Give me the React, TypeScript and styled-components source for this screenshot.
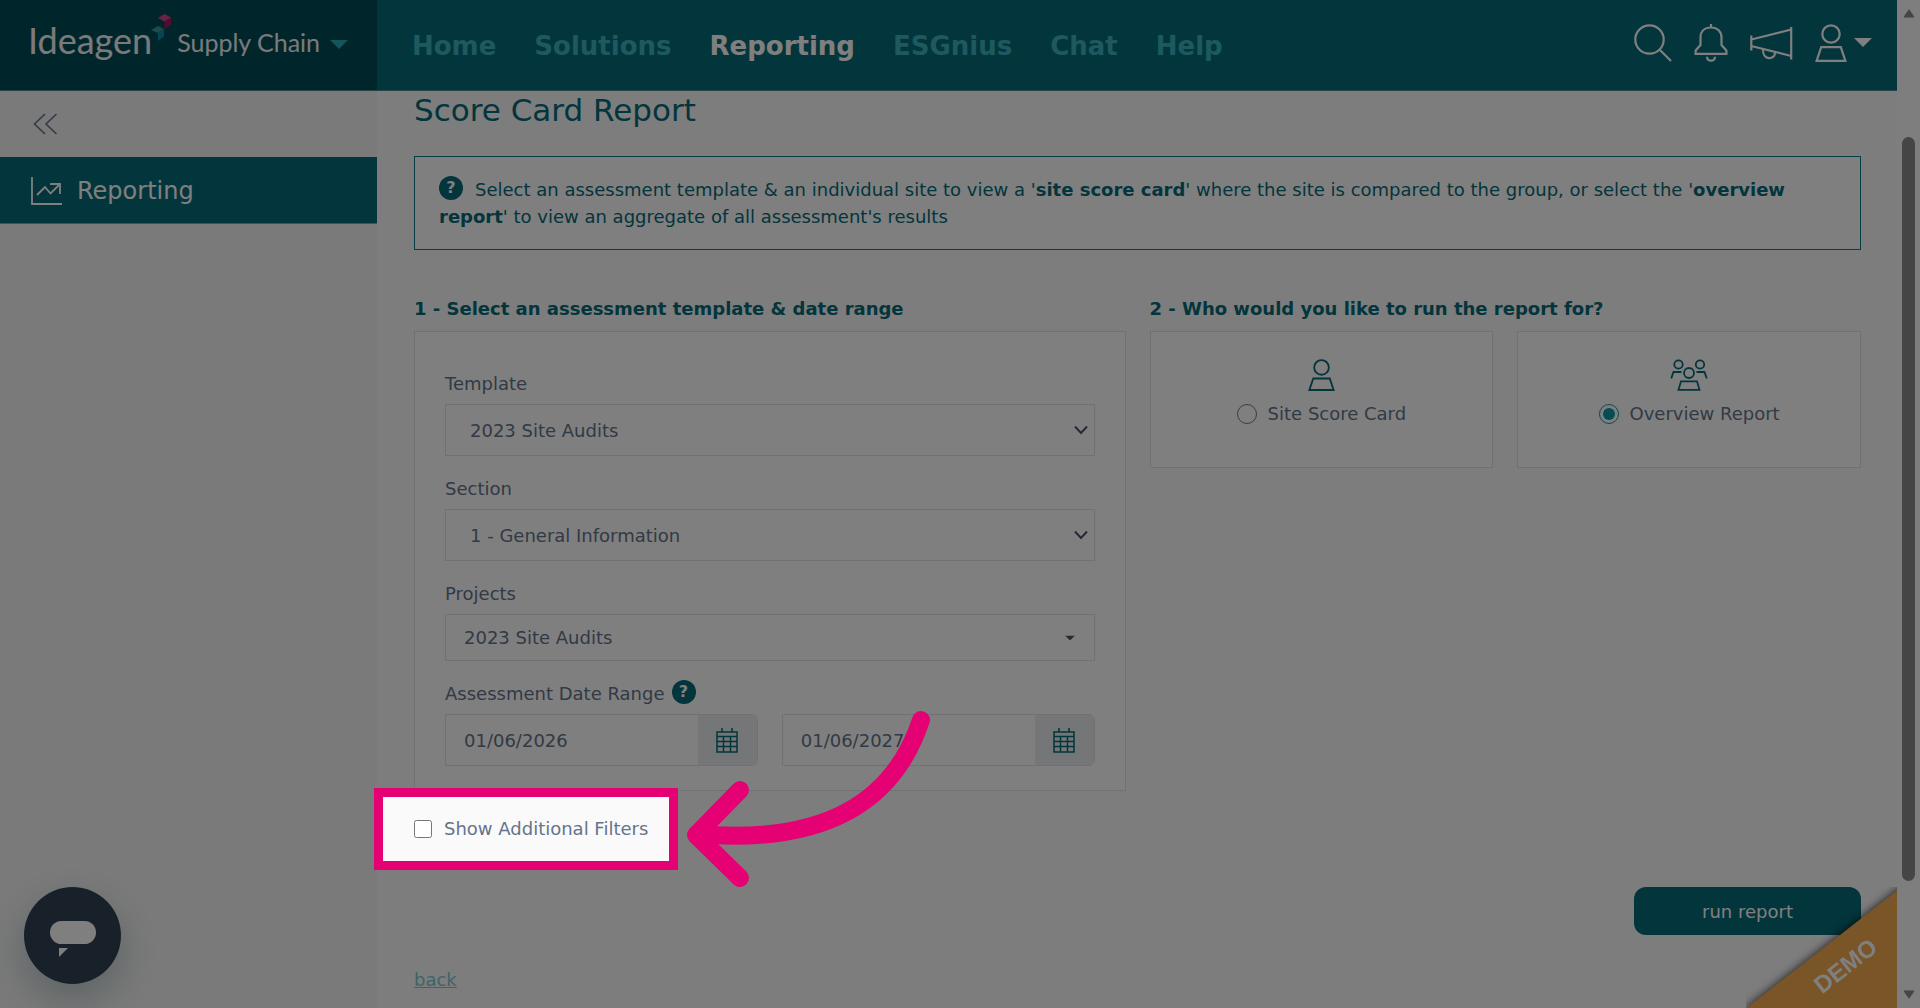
import React from "react";
import styled, { createGlobalStyle } from "styled-components";

const teal = "#066a78";
const slate = "#64748b";
const line = "#e2e2e4";
const pink = "#e50073";

const GlobalStyle = createGlobalStyle`
  *, *::before, *::after { box-sizing: border-box; }
  body {
    margin: 0;
    background: #fafafa;
    color: ${slate};
    font-family: Verdana, "DejaVu Sans", sans-serif;
    font-size: 16px;
    line-height: 27px;
  }
  button, input, select { font: inherit; color: inherit; }
`;

const Window = styled.div`
  display: flex;
  height: 100vh;
  overflow: hidden;
`;

const Page = styled.div`
  flex: 1;
  min-width: 0;
  display: flex;
  flex-direction: column;
`;

const TopBar = styled.header`
  display: flex;
  flex: none;
  height: 91px;
  background: ${teal};
  border-bottom: 1px solid #4e8a92;
`;

const Brand = styled.button`
  flex: none;
  display: flex;
  align-items: center;
  width: 377px;
  padding: 0 0 2px 28px;
  border: 0;
  background: #004d59;
  color: #f4f4f4;
  font-family: Lato, sans-serif;
  text-align: left;
`;

const BrandName = styled.span`
  padding-bottom: 8px;
  font-size: 36px;
  line-height: 44px;
`;

const BrandProduct = styled.span`
  padding: 0 10px 4px 0;
  font-size: 25px;
  line-height: 32px;
`;

const BrandMark = styled.svg`
  width: 21px;
  height: 28px;
  margin: 0 5px 32px -1px;
`;

const Nav = styled.nav`
  flex: 1;
  display: flex;
  align-items: center;
  gap: 38px;
  padding: 2px 0 0 35px;
`;

const NavLink = styled.a<{ $active?: boolean }>`
  color: ${(p) => (p.$active ? "#ffffff" : "#3cb3be")};
  font-size: 26px;
  font-weight: 700;
  line-height: 32px;
  text-decoration: none;
`;

const Tools = styled.div`
  display: flex;
  align-items: center;
  gap: 22px;
  padding: 0 25px 5px 0;
`;

const ToolButton = styled.button`
  display: flex;
  align-items: center;
  gap: 7px;
  padding: 0;
  border: 0;
  background: none;
  color: #ffffff;
`;

const Body = styled.div`
  flex: 1;
  min-height: 0;
  display: flex;
`;

const Sidebar = styled.aside`
  flex: none;
  width: 377px;
  background: #f5f5f5;
`;

const Collapse = styled.button`
  display: flex;
  align-items: center;
  height: 66px;
  padding: 0 32px;
  border: 0;
  background: none;
`;

const SideLink = styled.a`
  display: flex;
  align-items: center;
  gap: 14px;
  height: 67px;
  padding: 2px 0 0 31px;
  background: ${teal};
  border-bottom: 1px solid #7fa9af;
  color: #ffffff;
  font-size: 24px;
  text-decoration: none;
`;

const Main = styled.main`
  flex: 1;
  min-width: 0;
  display: flex;
  flex-direction: column;
  padding: 0 36px 0 37px;
`;

const Title = styled.h1`
  margin: 0 0 27px;
  color: ${teal};
  font-size: 31px;
  font-weight: 400;
  line-height: 38px;
`;

const Notice = styled.p`
  margin: 0 0 45px;
  padding: 19px 24px;
  background: #ffffff;
  border: 1px solid #0f7f8c;
  color: ${teal};
  font-size: 18px;
`;

const HelpDot = styled.span<{ $gap?: boolean }>`
  display: inline-block;
  align-self: flex-start;
  vertical-align: top;
  width: 24px;
  height: 24px;
  margin-right: ${(p) => (p.$gap ? "12px" : "0")};
  border-radius: 50%;
  background: ${teal};
  color: #ffffff;
  font-size: 16px;
  font-weight: 700;
  line-height: 24px;
  text-align: center;
`;

const Columns = styled.div`
  display: grid;
  grid-template-columns: 1fr 1fr;
  gap: 24px;
`;

const StepTitle = styled.h2`
  margin: 0 0 9px;
  color: ${teal};
  font-size: 18px;
  font-weight: 700;
  line-height: 27px;
`;

const FormCard = styled.section`
  display: grid;
  gap: 19px;
  padding: 38px 30px 24px;
  background: #ffffff;
  border: 1px solid ${line};
`;

const Field = styled.div`
  display: grid;
  gap: 7px;
`;

const Label = styled.label`
  display: flex;
  align-items: center;
  gap: 7px;
  height: 27px;
  font-size: 18px;
`;

const SelectWrap = styled.div`
  position: relative;
  display: grid;
`;

const Select = styled.select<{ $compact?: boolean }>`
  appearance: none;
  height: ${(p) => (p.$compact ? "47px" : "52px")};
  padding: 0 ${(p) => (p.$compact ? "18px" : "24px")};
  border: 1px solid ${line};
  border-radius: 0;
  background: #ffffff;
  font-size: 18px;
`;

const SelectArrow = styled.svg<{ $right: number }>`
  position: absolute;
  top: 50%;
  right: ${(p) => p.$right}px;
  transform: translateY(-50%);
  pointer-events: none;
`;

const Dates = styled.div`
  display: grid;
  grid-template-columns: 1fr 1fr;
  gap: 24px;
`;

const DateGroup = styled.div`
  display: flex;
  height: 52px;
  border: 1px solid ${line};
  border-radius: 0 6px 6px 0;
  overflow: hidden;
`;

const DateInput = styled.input`
  flex: 1;
  min-width: 0;
  padding: 0 18px;
  border: 0;
  background: #ffffff;
  font-size: 18px;
`;

const DateButton = styled.button`
  flex: none;
  display: grid;
  place-items: center;
  width: 59px;
  padding: 0;
  border: 0;
  background: #e9ecef;
  color: ${teal};
`;

const Choices = styled.div`
  display: grid;
  grid-template-columns: 1fr 1fr;
  gap: 24px;
`;

const Choice = styled.label`
  display: flex;
  flex-direction: column;
  align-items: center;
  gap: 9px;
  height: 137px;
  padding-top: 27px;
  background: #ffffff;
  border: 1px solid ${line};
  color: ${teal};
`;

const ChoiceText = styled.span`
  display: flex;
  align-items: center;
  gap: 11px;
  color: ${slate};
  font-size: 18px;
`;

const Radio = styled.input`
  width: 20px;
  height: 20px;
  margin: 0;
  accent-color: #0f98a6;
`;

const FilterRow = styled.div`
  position: relative;
  align-self: flex-start;
  margin: 24px 0 45px;
`;

const FilterLabel = styled.label`
  display: flex;
  align-items: center;
  gap: 12px;
  font-size: 18px;
`;

const Checkbox = styled.input`
  width: 18px;
  height: 18px;
  margin: 0;
`;

const Spotlight = styled.div`
  position: absolute;
  inset: -27px -30px -28px -40px;
  z-index: 10;
  border: 9px solid ${pink};
  box-shadow: 0 0 0 4000px rgba(0, 0, 0, 0.5);
  pointer-events: none;
`;

const Pointer = styled.svg`
  position: absolute;
  left: 100%;
  top: -107px;
  z-index: 11;
  width: 290px;
  height: 190px;
  margin-left: 34px;
  pointer-events: none;
`;

const RunButton = styled.button`
  align-self: flex-end;
  width: 227px;
  height: 48px;
  border: 0;
  border-radius: 12px;
  background: ${teal};
  color: #ffffff;
  font-size: 18px;
`;

const BackLink = styled.a`
  align-self: flex-start;
  margin-top: 31px;
  color: #7fc9d1;
  font-size: 18px;
`;

const Scrollbar = styled.div`
  flex: none;
  display: flex;
  flex-direction: column;
  align-items: center;
  width: 23px;
  padding: 9px 0;
  background: #fdfdfd;
`;

const Thumb = styled.div`
  flex: 744;
  width: 13px;
  border-radius: 7px;
  background: #8b8b8b;
`;

const Gap = styled.div<{ $grow: number }>`
  flex: ${(p) => p.$grow};
`;

const ChatButton = styled.button`
  position: fixed;
  left: 24px;
  bottom: 24px;
  display: grid;
  place-items: center;
  width: 97px;
  height: 97px;
  padding: 8px 0 0;
  border: 0;
  border-radius: 50%;
  background: #304352;
  box-shadow: 0 16px 40px rgba(6, 50, 60, 0.25);
`;

const Corner = styled.div`
  position: fixed;
  right: 23px;
  bottom: 0;
  width: 151px;
  height: 121px;
  overflow: hidden;
`;

const Ribbon = styled.div`
  position: absolute;
  left: -20px;
  top: 62px;
  width: 240px;
  height: 130px;
  transform: rotate(-38deg);
  transform-origin: 96px 0;
  padding: 14px 0 0 68px;
  background: #f2aa4e;
  box-shadow: 0 0 10px rgba(0, 0, 0, 0.8);
  color: #ffffff;
  font-family: "Liberation Sans", Arial, sans-serif;
  font-size: 24px;
  font-weight: 700;
  line-height: 27px;
`;

const Triangle = ({ w, h, color }: { w: number; h: number; color: string }) => (
  <svg width={w} height={h} viewBox="0 0 18 9" preserveAspectRatio="none" aria-hidden="true">
    <path d="M0 0H18L9 9Z" fill={color} />
  </svg>
);

const UserIcon = ({ w, h }: { w: number; h: number }) => (
  <svg width={w} height={h} viewBox="0 0 32 38" fill="none" stroke="currentColor" strokeWidth="2.2" aria-hidden="true">
    <circle cx="16" cy="10" r="8.7" />
    <path d="M6.2 23.2H25.8L30.4 36.8H1.6Z" />
  </svg>
);

const GroupIcon = () => (
  <svg width="38" height="32" viewBox="0 0 38 32" fill="none" stroke="currentColor" strokeWidth="1.8" aria-hidden="true">
    <circle cx="8.5" cy="5.5" r="4.2" />
    <circle cx="30" cy="5.5" r="4.2" />
    <circle cx="19" cy="14" r="5" />
    <path d="M1.2 19.5L3.5 13H11.5M36.8 19.5L34.5 13H26.5" />
    <path d="M11 22.3H27L29.5 30.8H8.5Z" />
  </svg>
);

const CalendarIcon = () => (
  <svg width="22" height="25" viewBox="0 0 22 25" fill="none" stroke="currentColor" strokeWidth="1.5" aria-hidden="true">
    <path d="M1 4H21V24H1ZM1 8.5H21M1 13.5H21M1 18.5H21M7.5 8.5V24M14.5 8.5V24M6 0V4M16 0V4" />
  </svg>
);

const Chevron = () => (
  <SelectArrow $right={7} width="14" height="9" viewBox="0 0 14 9" fill="none" stroke="#4a5568" strokeWidth="2" aria-hidden="true">
    <path d="M1 1L7 7.5L13 1" />
  </SelectArrow>
);

export default function App() {
  return (
    <>
      <GlobalStyle />
      <Window>
        <Page>
          <TopBar>
            <Brand type="button">
              <BrandName>Ideagen</BrandName>
              <BrandMark viewBox="0 0 21 28" aria-hidden="true">
                <path d="M7 4L13.5 0L20 3.5L13.5 7.5Z" fill="#d8458c" />
                <path d="M20 3.5V10.5L13.5 15V7.5Z" fill="#ab1766" />
                <path d="M0 16L7 12L13 15L7 19Z" fill="#3a97a3" />
                <path d="M13 15V22.5L7 27V19Z" fill="#0a8c9c" />
              </BrandMark>
              <BrandProduct>Supply Chain</BrandProduct>
              <Triangle w={18} h={9} color="#2ba9b5" />
            </Brand>
            <Nav>
              <NavLink href="#home">Home</NavLink>
              <NavLink href="#solutions">Solutions</NavLink>
              <NavLink href="#reporting" $active>Reporting</NavLink>
              <NavLink href="#esgnius">ESGnius</NavLink>
              <NavLink href="#chat">Chat</NavLink>
              <NavLink href="#help">Help</NavLink>
            </Nav>
            <Tools>
              <ToolButton type="button" aria-label="Search">
                <svg width="38" height="38" viewBox="0 0 38 38" fill="none" stroke="currentColor" strokeWidth="2.2">
                  <circle cx="15.5" cy="15.5" r="14.2" />
                  <path d="M25.5 25.5L37 37" />
                </svg>
              </ToolButton>
              <ToolButton type="button" aria-label="Notifications">
                <svg width="34" height="38" viewBox="0 0 34 38" fill="none" stroke="currentColor" strokeWidth="2.2">
                  <path d="M17 0V3.5M17 3.5C10.5 3.5 6.5 7.5 6.5 13.5V21L1.6 26.5V29.8H32.4V26.5L27.5 21V13.5C27.5 7.5 23.5 3.5 17 3.5Z" />
                  <path d="M13 32.8C13.3 38 20.7 38 21 32.8" />
                </svg>
              </ToolButton>
              <ToolButton type="button" aria-label="Announcements">
                <svg width="43" height="34" viewBox="0 0 43 34" fill="none" stroke="currentColor" strokeWidth="2.2">
                  <path d="M1.3 9.5V24.5M41.2 1V33.5M1.3 13.5L41.2 3.5M1.3 20L41.2 30" />
                  <path d="M13 23.5C12.5 34.5 25 34.5 25 26.5" />
                </svg>
              </ToolButton>
              <ToolButton type="button" aria-label="Account">
                <UserIcon w={32} h={38} />
                <Triangle w={18} h={9} color="#ffffff" />
              </ToolButton>
            </Tools>
          </TopBar>
          <Body>
            <Sidebar>
              <Collapse type="button" aria-label="Collapse menu">
                <svg width="26" height="22" viewBox="0 0 26 22" fill="none" stroke="currentColor" strokeWidth="1.6">
                  <path d="M13 1L2.5 11L13 21M24.5 1L14 11L24.5 21" />
                </svg>
              </Collapse>
              <SideLink href="#reporting">
                <svg width="32" height="28" viewBox="0 0 32 28" fill="none" stroke="currentColor" strokeWidth="1.8" aria-hidden="true">
                  <path d="M1 0V27H31" />
                  <path d="M6 18L14 10L19.5 16.5L28.5 7.5M19 7H29V17" />
                </svg>
                Reporting
              </SideLink>
            </Sidebar>
            <Main>
              <Title>Score Card Report</Title>
              <Notice>
                <HelpDot $gap>?</HelpDot>
                Select an assessment template &amp; an individual site to view a '<b>site score card</b>' where the site is
                compared to the group, or select the '<b>overview report</b>' to view an aggregate of all assessment's
                results
              </Notice>
              <Columns>
                <div>
                  <StepTitle>1 - Select an assessment template &amp; date range</StepTitle>
                  <FormCard>
                    <Field>
                      <Label htmlFor="template">Template</Label>
                      <SelectWrap>
                        <Select id="template">
                          <option>2023 Site Audits</option>
                        </Select>
                        <Chevron />
                      </SelectWrap>
                    </Field>
                    <Field>
                      <Label htmlFor="section">Section</Label>
                      <SelectWrap>
                        <Select id="section">
                          <option>1 - General Information</option>
                        </Select>
                        <Chevron />
                      </SelectWrap>
                    </Field>
                    <Field>
                      <Label htmlFor="projects">Projects</Label>
                      <SelectWrap>
                        <Select id="projects" $compact>
                          <option>2023 Site Audits</option>
                        </Select>
                        <SelectArrow $right={20} width="10" height="5" viewBox="0 0 10 5" aria-hidden="true">
                          <path d="M0 0H10L5 5Z" fill="#4a5568" />
                        </SelectArrow>
                      </SelectWrap>
                    </Field>
                    <Field>
                      <Label htmlFor="from">
                        Assessment Date Range <HelpDot>?</HelpDot>
                      </Label>
                      <Dates>
                        <DateGroup>
                          <DateInput id="from" defaultValue="01/06/2026" />
                          <DateButton type="button" aria-label="Pick start date">
                            <CalendarIcon />
                          </DateButton>
                        </DateGroup>
                        <DateGroup>
                          <DateInput aria-label="End date" defaultValue="01/06/2027" />
                          <DateButton type="button" aria-label="Pick end date">
                            <CalendarIcon />
                          </DateButton>
                        </DateGroup>
                      </Dates>
                    </Field>
                  </FormCard>
                </div>
                <div>
                  <StepTitle>2 - Who would you like to run the report for?</StepTitle>
                  <Choices>
                    <Choice>
                      <UserIcon w={27} h={32} />
                      <ChoiceText>
                        <Radio type="radio" name="scope" />
                        Site Score Card
                      </ChoiceText>
                    </Choice>
                    <Choice>
                      <GroupIcon />
                      <ChoiceText>
                        <Radio type="radio" name="scope" defaultChecked />
                        Overview Report
                      </ChoiceText>
                    </Choice>
                  </Choices>
                </div>
              </Columns>
              <FilterRow>
                <FilterLabel>
                  <Checkbox type="checkbox" />
                  Show Additional Filters
                </FilterLabel>
                <Spotlight />
                <Pointer viewBox="682 708 290 190" fill="none" stroke={pink} strokeWidth="18" strokeLinecap="round" strokeLinejoin="round" aria-hidden="true">
                  <path d="M921 720C894 802 825 845 697 834" />
                  <path d="M740 790L696 835L740 878" />
                </Pointer>
              </FilterRow>
              <RunButton type="button">run report</RunButton>
              <BackLink href="#back">back</BackLink>
            </Main>
          </Body>
        </Page>
        <Scrollbar aria-hidden="true">
          <svg width="12" height="9" viewBox="0 0 12 9">
            <path d="M6 0.8L11 8H1Z" fill="#8b8b8b" stroke="#8b8b8b" strokeLinejoin="round" />
          </svg>
          <Gap $grow={119} />
          <Thumb />
          <Gap $grow={109} />
          <svg width="12" height="9" viewBox="0 0 12 9">
            <path d="M6 8.2L11 1H1Z" fill="#8b8b8b" stroke="#8b8b8b" strokeLinejoin="round" />
          </svg>
        </Scrollbar>
      </Window>
      <ChatButton type="button" aria-label="Open chat">
        <svg width="46" height="37" viewBox="0 0 46 37" fill="#ffffff">
          <rect width="46" height="23" rx="11.5" />
          <path d="M9 27H18L9 36Z" />
        </svg>
      </ChatButton>
      <Corner>
        <Ribbon>DEMO</Ribbon>
      </Corner>
    </>
  );
}
